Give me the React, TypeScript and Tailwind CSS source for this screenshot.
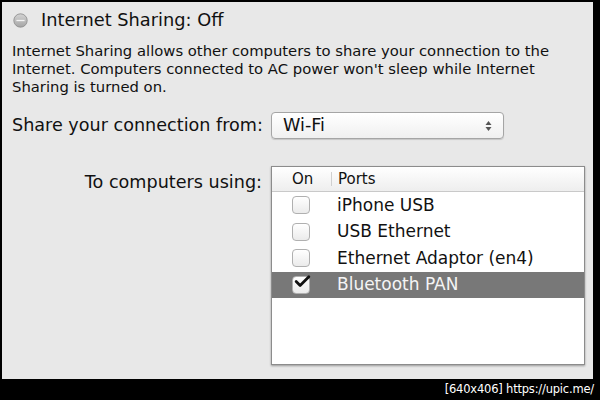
import { Check } from 'lucide-react';

const ports = [
  { name: 'iPhone USB', on: false },
  { name: 'USB Ethernet', on: false },
  { name: 'Ethernet Adaptor (en4)', on: false },
  { name: 'Bluetooth PAN', on: true, selected: true },
];

function StatusDot() {
  return (
    <svg width="15" height="15" viewBox="0 0 15 15">
      <defs>
        <linearGradient id="dot" x1="0" y1="0" x2="0" y2="1">
          <stop offset="0" stopColor="#d4d4d4" />
          <stop offset="1" stopColor="#a5a5a5" />
        </linearGradient>
      </defs>
      <circle cx="7.5" cy="7.5" r="6.7" fill="url(#dot)" stroke="#8a8a8a" strokeWidth="0.8" />
      <line x1="3.4" y1="7.5" x2="11.6" y2="7.5" stroke="#f4f4f4" strokeWidth="1.3" />
    </svg>
  );
}

function Checkbox({ checked }: { checked: boolean }) {
  return (
    <div className="relative w-[18px] h-[18px] rounded-[4px] border border-[#b0b0b0] bg-gradient-to-b from-white to-[#ebebeb]">
      {checked && (
        <Check className="absolute -top-[5px] left-[0px] w-[19px] h-[19px] text-[#111]" strokeWidth={3.5} />
      )}
    </div>
  );
}

export default function App() {
  return (
    <div className="w-[600px] h-[400px] bg-black flex flex-col font-['DejaVu_Sans',sans-serif]">
      <div className="mt-[2px] ml-[2px] w-[591px] h-[377px] bg-[#e8e8e8] pl-[10px] pt-[6px] text-[#111]">
        <div className="flex items-center gap-[13px] pl-[1px] h-[24px]">
          <StatusDot />
          <span className="text-[17.8px]">Internet Sharing: Off</span>
        </div>

        <p className="mt-[10px] text-[14.8px] leading-[18px] pr-[20px]">
          Internet Sharing allows other computers to share your connection to the Internet. Computers connected to AC power won't sleep while Internet Sharing is turned on.
        </p>

        <div className="mt-[16px] flex items-center">
          <span className="w-[252px] text-[17.6px]">Share your connection from:</span>
          <div className="ml-[7px] w-[233px] h-[27px] flex items-center justify-between px-[11px] rounded-[4px] border border-[#a5a5a5] bg-gradient-to-b from-white to-[#f0f0f0] shadow-[0_1px_1px_rgba(0,0,0,0.15)]">
            <span className="text-[17.6px]">Wi-Fi</span>
            <svg width="7" height="12" viewBox="0 0 7 12">
              <path d="M3.5 1 L6.5 5 L0.5 5 Z" fill="#555" />
              <path d="M3.5 11 L6.5 7 L0.5 7 Z" fill="#555" />
            </svg>
          </div>
        </div>

        <div className="mt-[27px] flex items-start">
          <span className="w-[252px] text-right text-[17.6px] pr-[2px] mt-[3px]">To computers using:</span>
          <div className="ml-[7px] w-[314px] h-[199px] border border-[#8c8c8c] bg-white shadow-[0_1px_2px_rgba(0,0,0,0.35)] flex flex-col">
            <div className="h-[25px] shrink-0 flex items-center border-b border-[#c9c9c9] bg-gradient-to-b from-white to-[#eeeeee] text-[15px]">
              <span className="w-[59px] pl-[20px]">On</span>
              <span className="border-l border-[#d0d0d0] h-[14px]" />
              <span className="pl-[6px]">Ports</span>
            </div>
            {ports.map((p) => (
              <div
                key={p.name}
                className={`h-[26.5px] shrink-0 flex items-center text-[17px] ${
                  p.selected ? 'bg-[#787878] text-[#f4f4f4]' : 'text-[#111]'
                }`}
              >
                <div className="w-[65px] pl-[20px]">
                  <Checkbox checked={p.on} />
                </div>
                <span>{p.name}</span>
              </div>
            ))}
          </div>
        </div>
      </div>
      <div className="flex-1 flex items-center justify-end pr-[6px] text-white text-[11.5px] tracking-[-0.2px]">
        [640x406] https://upic.me/
      </div>
    </div>
  );
}
